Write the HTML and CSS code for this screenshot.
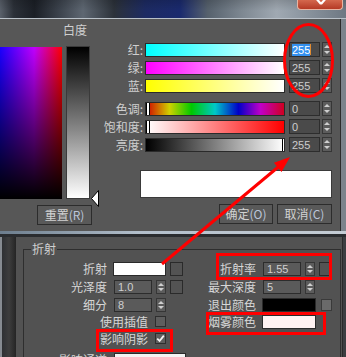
FILE: index.html
```html
<!DOCTYPE html>
<html lang="zh-CN">
<head>
<meta charset="utf-8">
<link rel="stylesheet" href="styles.css">
</head>
<body>
<div class="screen">
  <div class="titlebar">
    <div class="close"><svg width="44" height="9" viewBox="0 0 44 9"><path d="M17 -3 L23 4 M29 -3 L23 4" stroke="#fff" stroke-width="2.2" fill="none"/></svg></div>
  </div>
  <div class="window">
    <div class="dialog">
      <div class="dlg-left">
        <div class="wlabel">白度</div>
        <div class="pickers">
          <div class="huebox"></div>
          <div class="wbar"></div>
          <svg class="wpointer" width="8" height="17" viewBox="0 0 8 17"><polygon points="7.5,0.5 0.5,8.5 7.5,16.5" fill="#fff" stroke="#000"/></svg>
        </div>
        <div class="btn btn-reset">重置<span class="acc">(R)</span></div>
      </div>
      <div class="dlg-right">
        <div class="rows">
          <div class="crow"><span class="clabel">红:</span><div class="cbar bar-r"></div><div class="num"><span class="sel">255</span><span class="caret"></span></div><div class="spin"></div></div>
          <div class="crow"><span class="clabel">绿:</span><div class="cbar bar-g"></div><div class="num">255</div><div class="spin"></div></div>
          <div class="crow"><span class="clabel">蓝:</span><div class="cbar bar-b"></div><div class="num">255</div><div class="spin"></div></div>
          <div class="crow sep"><span class="clabel">色调:</span><div class="cbar bar-h"></div><div class="num">0</div><div class="spin"></div></div>
          <div class="crow"><span class="clabel">饱和度:</span><div class="cbar bar-s"></div><div class="num">0</div><div class="spin"></div></div>
          <div class="crow"><span class="clabel">亮度:</span><div class="cbar bar-v"></div><div class="num">255</div><div class="spin"></div></div>
        </div>
        <div class="preview"></div>
        <div class="dlg-buttons"><div class="btn btn-ok">确定<span class="acc">(O)</span></div><div class="btn btn-cancel">取消<span class="acc">(C)</span></div></div>
      </div>
    </div>
  </div>
  <div class="win-bottom"></div>
  <div class="gapstrip"></div>
  <div class="lower">
    <div class="lower-edge"></div>
    <div class="rollout">
      <fieldset class="group">
        <legend>折射</legend>
        <div class="params">
          <div class="plabel">折射</div>
          <div class="pctrl"><div class="swatch sw-white"></div><div class="mapbtn"></div></div>
          <div class="plabel">折射率</div>
          <div class="pctrl"><div class="pnum">1.55</div><div class="spin pspin"></div><div class="mapbtn"></div></div>

          <div class="plabel">光泽度</div>
          <div class="pctrl"><div class="pnum">1.0</div><div class="spin pspin"></div><div class="mapbtn"></div></div>
          <div class="plabel">最大深度</div>
          <div class="pctrl"><div class="pnum">5</div><div class="spin pspin"></div></div>

          <div class="plabel">细分</div>
          <div class="pctrl"><div class="pnum">8</div><div class="spin pspin"></div></div>
          <div class="plabel">退出颜色</div>
          <div class="pctrl"><div class="swatch sw-black"></div><div class="mapbtn lite"></div></div>

          <div class="checkrow"><span class="plabel">使用插值</span><div class="chk"></div></div>
          <div class="plabel">烟雾颜色</div>
          <div class="pctrl"><div class="swatch sw-fog"></div></div>

          <div class="checkrow"><span class="plabel">影响阴影</span><div class="chk"><svg width="9" height="9" viewBox="0 0 9 9"><path d="M1.2 4.6 L3.6 7 L7.8 1.6" stroke="#f2f2f2" stroke-width="1.8" fill="none"/></svg></div></div>
          <div></div>
          <div></div>

          <div class="plabel row6">影响通道</div>
          <div class="pctrl row6"><div class="dropdown">仅颜色</div></div>
        </div>
      </fieldset>
    </div>
  </div>
  <svg class="annot" width="346" height="357" viewBox="0 0 346 357">
    <ellipse cx="308.5" cy="60.5" rx="24" ry="36" fill="none" stroke="#f00" stroke-width="3"/>
    <line x1="162" y1="264" x2="280" y2="165.5" stroke="#f00" stroke-width="3"/>
    <polygon points="290,157 273.9,162.7 281.5,171.9" fill="#f00"/>
    <rect x="217.5" y="254.5" width="113" height="24" fill="none" stroke="#f00" stroke-width="3"/>
    <rect x="207.5" y="313.5" width="117" height="20" fill="none" stroke="#f00" stroke-width="3"/>
    <rect x="97.5" y="330.5" width="74" height="20" fill="none" stroke="#f00" stroke-width="3"/>
  </svg>
</div>
</body>
</html>
```

FILE: styles.css
```css
* { box-sizing: border-box; }
html, body { margin: 0; padding: 0; }
body {
  background: #3a3c3f;
  font-family: "Noto Sans CJK SC", "Noto Sans", sans-serif;
  font-size: 12px;
  color: #d0d0d0;
  overflow: hidden;
}
.screen { position: relative; width: 346px; height: 357px; overflow: hidden; }

/* blurred background + window title area */
.titlebar {
  height: 18px;
  display: flex;
  justify-content: flex-end;
  padding-right: 3px;
  background:
    linear-gradient(to bottom, rgba(0,0,0,0.15), rgba(0,0,0,0) 60%),
    linear-gradient(to right, #5a616b 0, #2b3038 4%, #1b1f26 10%, #3b424c 17%, #5e6772 24%, #2c323a 33%, #1d2b63 42%, #1a2a6e 52%, #56616d 60%, #7e8892 70%, #a0a9b2 80%, #909aa4 86%, #6e7883 100%);
}
.close {
  width: 46px;
  height: 10px;
  background: linear-gradient(#d4684e, #b53a25);
  border: 1px solid #e6b4a2;
  border-top: none;
  border-radius: 0 0 4px 4px;
  overflow: hidden;
}
.close svg { display: block; }

.window {
  background: #7b838b;
  border-top: 1px solid #b9c1c9;
  padding-right: 5px;
}
.dialog {
  height: 212px;
  background: #575757;
  border-right: 1px solid #2b2b2b;
  display: flex;
}
.win-bottom {
  height: 3px;
  background: linear-gradient(to right, #6c7d8d, #b3bfcb 40%, #c4ccd4);
}
.gapstrip { height: 3px; background: #2a2c2f; }

/* left column of color dialog */
.dlg-left { width: 100px; padding-top: 4px; }
.wlabel { margin-left: 63px; line-height: 14px; white-space: nowrap; color: #cfcfcf; }
.pickers { display: flex; align-items: flex-start; margin-top: 9px; }
.huebox {
  margin-top: 1px;
  width: 62px;
  height: 152px;
  background:
    linear-gradient(to bottom, rgba(0,0,0,0), #000),
    linear-gradient(to right, #1a00ff, #c000ff 55%, #ff0000);
}
.wbar {
  margin-left: 4px;
  width: 24px;
  height: 153px;
  border: 1px solid #3a3a3a;
  background: linear-gradient(to bottom, #000, #888 55%, #fff);
}
.wpointer { display: block; align-self: flex-end; margin-left: 1px; margin-bottom: -8px; }

.btn {
  height: 20px;
  border: 1px solid #2c2c2c;
  background: #595959;
  color: #d2d2d2;
  display: flex;
  align-items: center;
  justify-content: center;
  white-space: nowrap;
  line-height: 14px;
}
.acc { color: #bcc6da; }
.btn-reset { margin-left: 37px; margin-top: 6px; width: 55px; }

/* right column of color dialog */
.dlg-right { flex: 1; padding-top: 23px; }
.rows { display: flex; flex-direction: column; gap: 3px; }
.crow { display: flex; align-items: center; height: 15px; }
.crow.sep { margin-top: 5px; }
.clabel { width: 45px; text-align: right; padding-right: 2px; line-height: 15px; white-space: nowrap; color: #cfcfcf; }
.cbar { width: 140px; height: 14px; border: 1px solid #2a2a2a; }
.bar-r { background: linear-gradient(to right, #00ffff, #ffffff); }
.bar-g { background: linear-gradient(to right, #ff00ff, #ffffff); }
.bar-b { background: linear-gradient(to right, #ffff00, #ffffff); }
.bar-h {
  background: linear-gradient(to right, #d00000, #d0d000 17%, #00c800 33%, #00c8c8 50%, #0000c8 67%, #c000c8 83%, #d00020);
  box-shadow: inset 1px 0 #000, inset 3px 0 #fff, inset 4px 0 #000;
}
.bar-s {
  background: linear-gradient(to right, #ffffff, #ff0000);
  box-shadow: inset 1px 0 #000, inset 3px 0 #fff, inset 4px 0 #000;
}
.bar-v {
  background: linear-gradient(to right, #000000, #ffffff);
  box-shadow: inset -1px 0 #fff, inset -2px 0 #000;
}
.num {
  margin-left: 4px;
  width: 31px;
  height: 15px;
  background: #4a4a4a;
  border: 1px solid #2d2d2d;
  font-family: "Liberation Sans", sans-serif;
  font-size: 11px;
  line-height: 12px;
  padding-left: 2px;
  color: #cdcdcd;
  display: flex;
  align-items: center;
}
.sel { background: #3390ef; color: #fff; }
.caret { width: 1px; height: 11px; background: #e08a30; }
.spin {
  margin-left: 2px;
  width: 10px;
  height: 15px;
  background: #5c5c5c;
  border: 1px solid #363636;
  display: flex;
  flex-direction: column;
  justify-content: space-evenly;
  align-items: center;
}
.spin::before {
  content: "";
  width: 0; height: 0;
  border-left: 3px solid transparent;
  border-right: 3px solid transparent;
  border-bottom: 3px solid #cfcfcf;
}
.spin::after {
  content: "";
  width: 0; height: 0;
  border-left: 3px solid transparent;
  border-right: 3px solid transparent;
  border-top: 3px solid #cfcfcf;
}
.preview {
  margin-top: 18px;
  margin-left: 40px;
  width: 192px;
  height: 28px;
  background: #ffffff;
  border: 1px solid #3a3a3a;
}
.dlg-buttons { display: flex; gap: 4px; margin-top: 6px; margin-left: 119px; }
.btn-ok { width: 54px; }
.btn-cancel { width: 55px; }

/* lower rollout */
.lower { height: 120px; display: flex; background: #3c3e41; }
.lower-edge {
  width: 15px;
  background: linear-gradient(to right, #868b91 0, #868b91 2px, #2e3033 2px, #3d3d3d 9px, #282828 15px);
}
.rollout {
  width: 328px;
  background: #525252;
  border-left: 1px solid #262626;
  border-right: 1px solid #2a2a2a;
}
.group {
  margin: 5px 1px 0 7px;
  border: 1px solid #2e2e2e;
  padding: 0;
  min-width: 0;
}
.group legend {
  margin-left: 7px;
  padding: 0 1px;
  line-height: 14px;
  color: #d0d0d0;
}
.params {
  display: grid;
  grid-template-columns: 83px 79px 70px 1fr;
  grid-template-rows: 18px 18px 17px 17px 17px 17px;
  padding-top: 4px;
  align-items: center;
  color: #d6d6d6;
}
.plabel { text-align: right; white-space: nowrap; line-height: 14px; }
.pctrl { display: flex; align-items: center; padding-left: 6px; }
.row6 { align-self: start; margin-top: 6px; }
.checkrow {
  grid-column: 1 / 3;
  display: flex;
  align-items: center;
  justify-content: flex-end;
  padding-right: 20px;
  gap: 7px;
}
.swatch { height: 14px; border: 1px solid #2a2a2a; }
.sw-white { width: 53px; background: #ffffff; }
.sw-black { width: 54px; background: #000000; }
.sw-fog { width: 54px; background: #fff2f2; }
.mapbtn { margin-left: 4px; width: 13px; height: 14px; background: #535353; border: 1px solid #2a2a2a; }
.mapbtn.lite { margin-left: 5px; width: 11px; height: 12px; background: #6a6a6a; border-color: #3a3a3a; }
.pnum {
  margin-left: 1px;
  width: 38px;
  height: 14px;
  background: #5a5a5a;
  border: 1px solid #2c2c2c;
  font-family: "Liberation Sans", sans-serif;
  font-size: 11px;
  line-height: 12px;
  padding-left: 3px;
  color: #d0d0d0;
}
.pspin { margin-left: 4px; height: 14px; }
.chk {
  width: 11px;
  height: 11px;
  background: #5e5e5e;
  border: 1px solid #2e2e2e;
  display: flex;
  align-items: center;
  justify-content: center;
}
.chk svg { display: block; }
.dropdown {
  margin-left: 1px;
  width: 75px;
  height: 16px;
  background: #f4f4f4;
  border: 1px solid #2a2a2a;
  color: #222;
  line-height: 14px;
  padding-left: 3px;
  padding-top: 2px;
}

/* red annotations drawn over the screenshot */
.annot { position: absolute; left: 0; top: 0; pointer-events: none; }
```
